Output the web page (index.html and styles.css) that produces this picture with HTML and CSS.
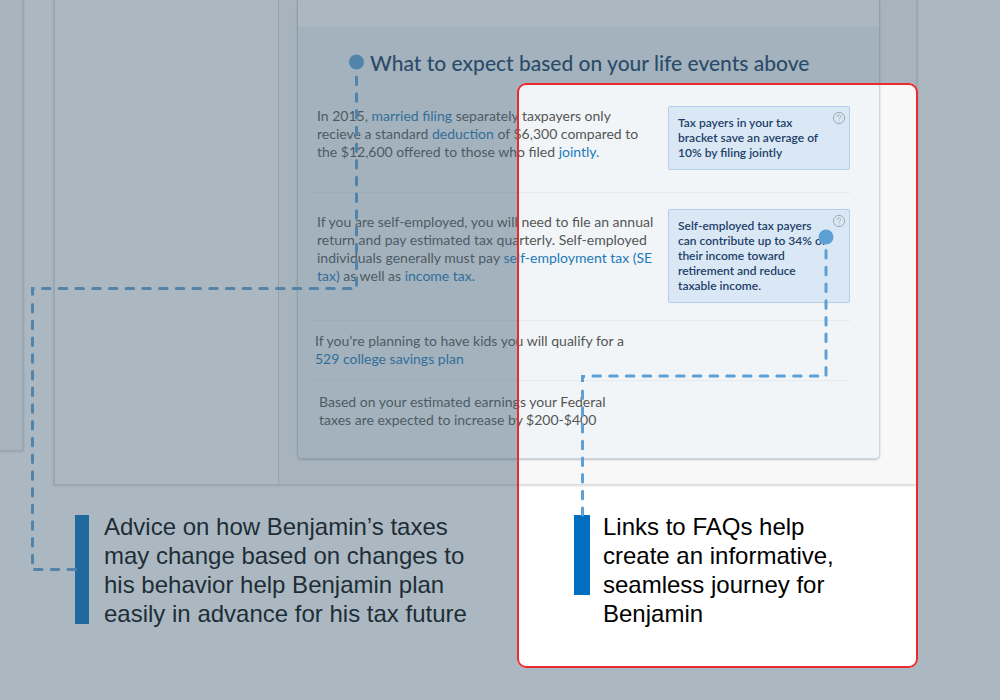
FILE: index.html
```html
<!DOCTYPE html>
<html lang="en">
<head>
<meta charset="utf-8">
<title>Tax journey: life events</title>
<meta name="viewport" content="width=device-width, initial-scale=1">
<link rel="stylesheet" href="styles.css">
</head>
<body>
<main class="board">
  <div class="screens">
    <div class="screen-edge"></div>
    <section class="screen">
      <div class="sidebar"></div>
      <div class="content">
        <article class="card">
          <div class="card-top"></div>
          <div class="card-body">
            <h1 class="card-title">What to expect based on your life events above</h1>
            <div class="row row-first">
              <p class="advice">In 2015, <a href="#married">married filing</a> separately taxpayers only<br>recieve a standard <a href="#deduction">deduction</a> of $6,300 compared to<br>the $12,600 offered to those who filed <a href="#jointly">jointly.</a></p>
              <aside class="tip">
                <p>Tax payers in your tax<br>bracket save an average of<br>10% by filing jointly</p>
                <button class="help" type="button" aria-label="Help"><svg viewBox="0 0 14 14" width="14" height="14"><circle cx="7" cy="7" r="5.6"/><path d="M5.2 5.800C5.200 4.600 6 4 7 4s1.800.6 1.800 1.600C8.800 6.800 7 6.900 7 8.300M7 9.400v1"/></svg></button>
              </aside>
            </div>
            <div class="row row-tall">
              <p class="advice">If you are self-employed, you will need to file an annual<br>return and pay estimated tax quarterly. Self-employed<br>individuals generally must pay <a href="#se">self-employment tax (SE<br>tax)</a> as well as <a href="#income">income tax.</a></p>
              <aside class="tip">
                <p>Self-employed tax payers<br>can contribute up to 34% of<br>their income toward<br>retirement and reduce<br>taxable income.</p>
                <button class="help" type="button" aria-label="Help"><svg viewBox="0 0 14 14" width="14" height="14"><circle cx="7" cy="7" r="5.6"/><path d="M5.2 5.800C5.200 4.600 6 4 7 4s1.800.6 1.800 1.600C8.800 6.800 7 6.900 7 8.300M7 9.400v1"/></svg></button>
              </aside>
            </div>
            <div class="row row-short">
              <p class="advice">If you’re planning to have kids you will qualify for a<br><a href="#plan">529 college savings plan</a></p>
            </div>
            <div class="row row-last">
              <p class="advice">Based on your estimated earnings your Federal<br>taxes are expected to increase by $200-$400</p>
            </div>
          </div>
        </article>
      </div>
    </section>
  </div>

  <div class="notes">
    <div class="note note-advice">
      <span class="bar"></span>
      <p>Advice on how Benjamin’s taxes<br>may change based on changes to<br>his behavior help Benjamin plan<br>easily in advance for his tax future</p>
    </div>
    <div class="note note-links">
      <span class="bar"></span>
      <p>Links to FAQs help<br>create an informative,<br>seamless journey for<br>Benjamin</p>
    </div>
  </div>

  <svg class="connectors" width="1000" height="700" viewBox="0 0 1000 700" aria-hidden="true">
    <g class="dots"><circle cx="356.500" cy="62" r="7.500"/><circle cx="826" cy="237" r="7.500"/></g>
    <g class="dashes">
      <path d="M356.500 77V286"/>
      <path d="M42.500 288.500H352"/>
      <path d="M32.500 304.500V564"/>
      <path d="M34.500 569.500H76"/>
      <path d="M826 250.500V376"/>
      <path d="M593 376H820"/>
      <path d="M582.500 391V515"/>
    </g>
    <path class="corner" d="M32.500 295.500V288.500H34.500M582.500 382V376.500H585"/>
  </svg>
  <div class="spotlight"></div>
</main>
</body>
</html>
```
FILE: styles.css
```css
* {
  box-sizing: border-box;
}

body,
h1,
p {
  margin: 0;
}

body {
  background: #fff;
}

.board {
  position: relative;
  min-height: 100vh;
  overflow: hidden;
  font-family: Lato, "Liberation Sans", sans-serif;
}

.screens {
  display: flex;
  align-items: flex-start;
  padding-right: 84px;
}

.screen-edge {
  width: 22px;
  height: 450px;
  margin-right: 33px;
  background: #f8f8f8;
  box-shadow: 0 0 2px 2px #dadada;
}

.screen {
  display: flex;
  flex: 1;
  background: #f8f8f8;
  box-shadow: 0 0 2px 2px #dadada;
}

.sidebar {
  width: 224px;
  background: #fff;
  border-right: 1px solid #d8dadc;
}

.content {
  flex: 1;
  padding: 0 36px 25px 18px;
}

.card {
  overflow: hidden;
  background: #fff;
  border: solid #d0d5d9;
  border-width: 0 1px 1px;
  border-radius: 0 0 5px 5px;
  box-shadow: 0 1px 2px #bfc3c7;
}

.card-top {
  height: 27px;
}

.card-body {
  padding: 19px 29px 24px 15px;
  background: #f1f5f8;
}

.card-title {
  padding-left: 57px;
  color: #143a62;
  font-size: 21px;
  font-weight: 500;
  line-height: 34px;
  white-space: nowrap;
}

.row {
  display: flex;
  justify-content: space-between;
  align-items: flex-start;
  border-bottom: 1px solid #e3ebf1;
}

.row-first {
  padding: 26px 0 22px 4px;
}

.row-tall {
  padding: 16px 0 17px 4px;
}

.row-tall .advice {
  padding-top: 4px;
}

.row-short {
  padding: 10px 0 12px 2px;
}

.row-last {
  padding: 11px 0 5px 6px;
  border-bottom: 0;
}

.advice {
  padding-top: 1px;
  color: #555;
  font-size: 14px;
  line-height: 18px;
  white-space: nowrap;
}

.advice a {
  color: #1e79b8;
  text-decoration: none;
}

.tip {
  display: flex;
  justify-content: space-between;
  align-items: flex-start;
  width: 182px;
  padding: 8px 3px 9px 9px;
  background: #dae8f6;
  border: 1px solid #b5cfea;
  border-radius: 2px;
}

.tip p {
  width: 152px;
  color: #1d4068;
  font-size: 12px;
  font-weight: 600;
  line-height: 15px;
  white-space: nowrap;
}

.help {
  display: flex;
  margin: -4px 0 0;
  padding: 0;
  background: none;
  border: 0;
}

.help svg {
  fill: none;
  stroke: #9eabb7;
}

.notes {
  display: flex;
  padding: 31px 82px 32px 75px;
}

.note {
  display: flex;
  align-items: flex-start;
  color: #000;
  font-family: "Liberation Sans", Arial, sans-serif;
  font-size: 24px;
  line-height: 29px;
  white-space: nowrap;
}

.note-advice {
  width: 499px;
  gap: 15px;
}

.note-links {
  gap: 13px;
}

.bar {
  width: 14px;
  height: 109px;
  background: #006fc0;
}

.note-links .bar {
  width: 16px;
  height: 80px;
}

.note p {
  margin-top: -3px;
}

.connectors {
  position: absolute;
  top: 0;
  left: 0;
  fill: none;
  stroke: #5da0d5;
  stroke-width: 3;
  pointer-events: none;
}

.dots {
  fill: #5da0d5;
  stroke: none;
}

.dashes {
  stroke-linecap: round;
  stroke-dasharray: 7.500 9.220;
}

.spotlight {
  position: absolute;
  top: 83px;
  left: 517px;
  width: 401px;
  height: 585px;
  border: 2px solid #e92a2f;
  border-radius: 9px;
  box-shadow: 0 0 0 2000px rgba(69, 97, 117, 0.45);
  pointer-events: none;
}
```
